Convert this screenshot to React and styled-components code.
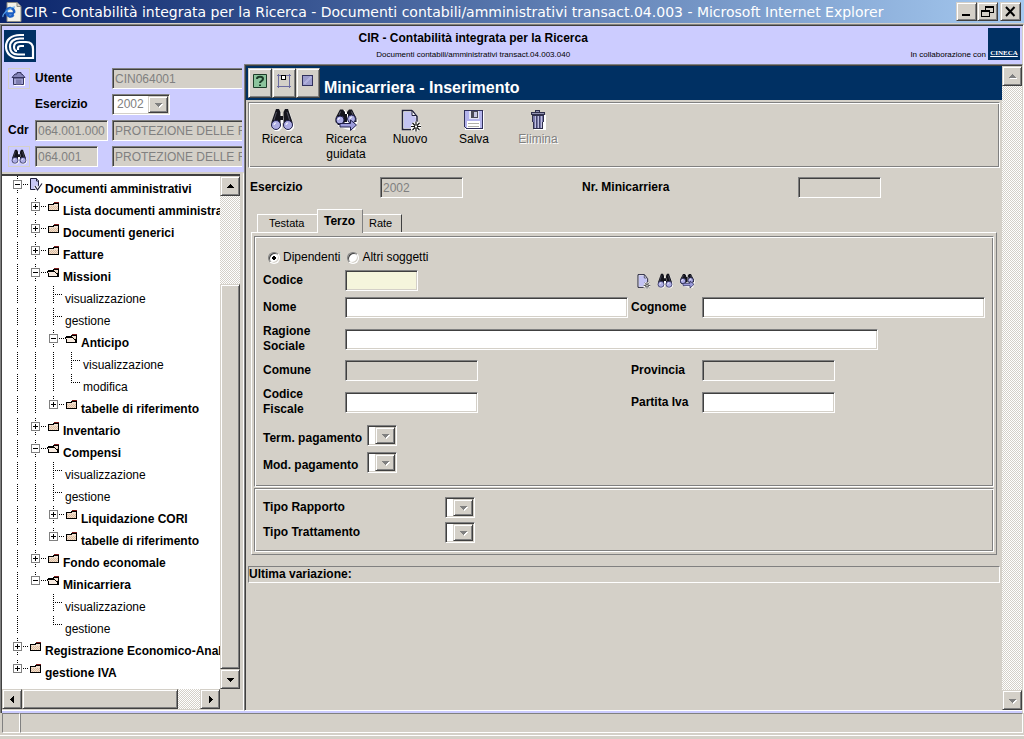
import styled, { createGlobalStyle, css } from 'styled-components'

const GlobalStyle = createGlobalStyle`
  * {
    box-sizing: border-box;
  }

  body {
    margin: 0;
    background: #d4d0c8;
    color: #000;
    font-family: 'Liberation Sans', Arial, sans-serif;
    font-size: 12px;
    line-height: 15px;
  }

  button,
  input,
  select {
    font: inherit;
  }

  svg {
    display: block;
    flex: none;
  }
`

/* Bordi in stile Windows classico */
const sunken = css`
  border: 1px solid;
  border-color: #808080 #fff #fff #808080;
  box-shadow: inset 1px 1px #404040, inset -1px -1px #d4d0c8;
`

const raised = css`
  border: 1px solid;
  border-color: #d4d0c8 #404040 #404040 #d4d0c8;
  box-shadow: inset 1px 1px #fff, inset -1px -1px #808080;
`

const groove = css`
  border: 1px solid;
  border-color: #808080 #fff #fff #808080;
  box-shadow: inset 1px 1px #fff, inset -1px -1px #808080;
`

const Window = styled.div`
  display: flex;
  flex-direction: column;
  height: 100vh;
  min-height: 600px;
  overflow: hidden;
`

const TitleBar = styled.header`
  display: flex;
  align-items: center;
  flex: none;
  height: 24px;
  padding: 0 3px 0 2px;
  border-bottom: 1px solid #d4d0c8;
  background: linear-gradient(to right, #0a246a, #a6caf0);
`

const WindowTitle = styled.h1`
  flex: 1;
  margin: 0 0 0 2px;
  color: #fff;
  font: 14px/22px 'DejaVu Sans', Verdana, sans-serif;
  white-space: nowrap;
`

const WindowButton = styled.button`
  ${raised}
  display: flex;
  align-items: center;
  justify-content: center;
  width: 21px;
  height: 19px;
  padding: 0;
  background: #d4d0c8;

  &:last-child {
    margin-left: 2px;
  }
`

const Client = styled.div`
  display: flex;
  flex: 1;
  flex-direction: column;
  min-height: 0;
  padding-bottom: 2px;
  border: 1px solid;
  border-color: #808080 #fff transparent #808080;
  border-bottom: 0;
  box-shadow: inset 1px 1px #404040, inset -1px 0 #d4d0c8;
  background: #ccccff;
`

const Banner = styled.div`
  display: flex;
  flex: none;
  height: 39px;
  padding: 1px 3px 0;
`

const LogoCnr = styled.div`
  margin-top: 4px;
`

const BannerText = styled.div`
  flex: 1;
  text-align: center;
`

const BannerTitle = styled.h2`
  margin: 0;
  font-size: 12px;
  line-height: 24px;
`

const SmallText = styled.span`
  display: block;
  font-size: 8px;
  line-height: 10px;
`

const Partner = styled.div`
  display: flex;
  align-items: flex-end;
  gap: 2px;
  height: 32px;
  margin-top: 2px;
`

const CinecaLogo = styled.div`
  display: flex;
  align-items: flex-end;
  justify-content: center;
  width: 32px;
  height: 32px;
  padding-bottom: 2px;
  background: #003063;
  color: #fff;
  font: bold 7px/9px 'Liberation Serif', serif;
  text-decoration: underline;
`

const Frames = styled.div`
  display: flex;
  flex: 1;
  min-height: 0;
  padding-left: 1px;
`

const Sidebar = styled.aside`
  display: flex;
  flex: none;
  flex-direction: column;
  width: 242px;
`

const UserFields = styled.div`
  display: grid;
  grid-template-columns: 27px 77px 170px;
  grid-auto-rows: 21px;
  row-gap: 5px;
  align-items: center;
  height: 108px;
  margin-right: 2px;
  padding: 4px 0 0 6px;
  overflow: hidden;
`

const Label = styled.label`
  font-weight: bold;
  white-space: ${(p) => (p.$wrap ? 'normal' : 'nowrap')};
`

const IconButton = styled.button`
  display: flex;
  align-items: center;
  justify-content: center;
  width: 22px;
  height: 21px;
  padding: 0;
  border: ${(p) => (p.$framed ? '1px solid #d4d0c8' : '0')};
  background: none;
`

const Field = styled.input`
  ${sunken}
  width: ${(p) => p.$width}px;
  height: 21px;
  padding: 0 2px;
  border-radius: 0;
  background: ${(p) => p.$bg || '#fff'};
  color: #000;

  &:disabled {
    background: #d4d0c8;
    color: #808080;
  }
`

const SelectFrame = styled.span`
  ${sunken}
  position: relative;
  display: block;
  width: ${(p) => p.$width}px;
  height: 21px;
  padding: 2px;
  background: #fff;
`

const SelectInput = styled.select`
  display: block;
  width: 100%;
  height: 15px;
  padding: 0 0 0 2px;
  border: 0;
  appearance: none;
  background: #fff;
  color: #808080;
  opacity: 1;
`

const SelectArrow = styled.span`
  ${raised}
  position: absolute;
  top: 1px;
  right: 1px;
  display: flex;
  align-items: center;
  justify-content: center;
  width: 20px;
  height: 17px;
  background: #d4d0c8;
  pointer-events: none;
`

const TreeFrame = styled.div`
  display: flex;
  flex: 1;
  flex-direction: column;
  min-height: 0;
  padding: 0 3px 1px 0;
  border-top: 2px solid #d4d0c8;
  border-right: 1px solid #fff;
  border-bottom: 1px solid #fff;
  background: #d4d0c8;
`

const TreeBody = styled.div`
  display: grid;
  flex: 1;
  grid-template-columns: 1fr 20px;
  grid-template-rows: 1fr 20px;
  min-height: 0;
  border-top: 2px solid #404040;
`

const Tree = styled.ul`
  min-width: 0;
  min-height: 0;
  margin: 0;
  padding: 0;
  overflow: hidden;
  background: #fff;
  list-style: none;
`

const TreeRow = styled.li`
  display: flex;
  height: 22px;
  white-space: nowrap;
`

const TreeLink = styled.a`
  flex: none;
  padding-top: 4px;
  color: #000;
  font-weight: ${(p) => (p.$leaf ? 'normal' : 'bold')};
  line-height: 18px;
  text-decoration: none;
`

const TreeIcon = styled.span`
  flex: none;
  width: 16px;
  padding-top: ${(p) => (p.$doc ? 2 : 4)}px;
`

const ScrollBar = styled.div`
  display: flex;
  flex: none;
  flex-direction: ${(p) => (p.$horizontal ? 'row' : 'column')};
  width: ${(p) => (p.$horizontal ? 'auto' : '20px')};
  background: repeating-conic-gradient(#fff 0 25%, #d4d0c8 0 50%) 0 0 / 2px 2px;
`

const ScrollButton = styled.button`
  ${raised}
  display: flex;
  flex: none;
  align-items: center;
  justify-content: center;
  width: 20px;
  height: 20px;
  padding: 0;
  background: #d4d0c8;
`

const ScrollSpace = styled.div`
  flex: ${(p) => p.$size};
`

const ScrollThumb = styled.div`
  ${raised}
  flex: ${(p) => p.$size};
  background: #d4d0c8;
`

const MainFrame = styled.main`
  display: flex;
  flex: 1;
  min-width: 0;
  padding: 1px 0 0 1px;
  border: 1px solid;
  border-color: #808080 #d4d0c8 #fff #808080;
  box-shadow: inset 1px 1px #404040;
  background: #d4d0c8;
`

const Content = styled.div`
  flex: 1;
  min-width: 0;
`

const PageHeader = styled.div`
  display: flex;
  height: 34px;
  padding: 2px 0 0 2px;
  background: #003063;
`

const HeaderButton = styled.button`
  ${raised}
  display: flex;
  justify-content: center;
  width: 24px;
  height: 30px;
  padding: 5px 0 0;
  background: #d4d0c8;
`

const PageTitle = styled.h2`
  margin: 8px 0 0 4px;
  color: #fff;
  font-size: 16px;
  line-height: 24px;
  white-space: nowrap;
`

const Toolbar = styled.div`
  ${groove}
  display: flex;
  height: 66px;
  margin: 2px 2px 9px;
  padding-left: 1px;
`

const ToolButton = styled.button`
  display: flex;
  flex-direction: column;
  align-items: center;
  width: 64px;
  padding: 5px 0 0;
  border: 0;
  background: none;
  color: #000;

  &:disabled {
    color: #808080;
    text-shadow: 1px 1px #fff;
  }
`

const KeyRow = styled.div`
  display: grid;
  grid-template-columns: 130px 202px 216px auto;
  justify-content: start;
  align-items: center;
  margin: 0 4px 11px;
`

const Tabs = styled.div`
  display: flex;
  align-items: flex-end;
  height: 24px;
  margin: 0 11px -1px;
`

const Tab = styled.button`
  position: relative;
  height: ${(p) => (p.$active ? 24 : 18)}px;
  margin-bottom: ${(p) => (p.$active ? 0 : 1)}px;
  padding: 0 6px 0 ${(p) => (p.$wide ? 11 : 6)}px;
  width: ${(p) => p.$width}px;
  border: 0;
  border-top: 1px solid #fff;
  border-left: ${(p) => (p.$after ? '0' : '1px solid #fff')};
  border-right: ${(p) => (p.$wide ? '0' : `1px solid ${p.$active ? '#808080' : '#404040'}`)};
  background: #d4d0c8;
  color: #000;
  font-size: ${(p) => (p.$active ? 12 : 11)}px;
  font-weight: ${(p) => (p.$active ? 'bold' : 'normal')};
  text-align: left;
`

const Panel = styled.div`
  margin: 0 5px;
  padding: 3px 2px 2px;
  border: 1px solid;
  border-color: #fff #808080 #808080 #fff;
`

const Group = styled.div`
  ${groove}
  padding: 8px;
  margin-top: ${(p) => (p.$next ? 1 : 0)}px;
`

const RadioRow = styled.div`
  display: flex;
  align-items: center;
  gap: 7px;
  height: 25px;
  padding-left: 5px;
`

const RadioLabel = styled.label`
  display: flex;
  align-items: center;
  gap: 3px;
`

const Radio = styled.input`
  width: 12px;
  height: 12px;
  margin: 0;
  border: 1px solid;
  border-color: #808080 #fff #fff #808080;
  border-radius: 50%;
  appearance: none;
  background: #fff;
  box-shadow: inset 1px 1px #404040, inset -1px -1px #d4d0c8;

  &:checked {
    background: radial-gradient(circle, #000 0 2px, #fff 2px);
  }
`

const DetailGrid = styled.div`
  display: grid;
  grid-template-columns: 82px 286px 71px minmax(0, 283px);
  row-gap: 6px;
  align-items: center;
`

const WideCell = styled.div`
  grid-column: span ${(p) => p.$span};
`

const SearchIcons = styled.div`
  display: flex;
  grid-column: span 2;
  padding-left: 1px;
`

const SelectRows = styled.div`
  display: grid;
  grid-template-columns: ${(p) => p.$label}px 30px;
  row-gap: ${(p) => p.$gap}px;
  align-items: ${(p) => (p.$spaced ? 'end' : 'center')};
  padding: ${(p) => (p.$spaced ? '8px 0 5px' : '0')};
`

const LastChange = styled.div`
  margin: 11px 2px 0;
  border: 1px solid;
  border-color: #808080 #fff #fff #808080;
  font-weight: bold;
`

const StatusBar = styled.footer`
  display: flex;
  flex: none;
  height: 20px;
  margin: 0 1px 0 2px;
`

const StatusCell = styled.div`
  flex: ${(p) => (p.$fill ? '1' : '0 0 18px')};
  border: 1px solid;
  border-color: #808080 #fff #fff #808080;
`

const BottomEdge = styled.div`
  flex: none;
  height: 6px;
  padding-top: 2px;

  &::before {
    content: '';
    display: block;
    border-top: 1px solid #fff;
  }
`

function Arrow({ dir = 'down', disabled }) {
  const angle = { down: 0, left: 90, up: 180, right: 270 }[dir]
  const shape = 'M2 4h7v1H8v1H7v1H6v1H5V7H4V6H3V5H2z'
  return (
    <svg width="11" height="11" viewBox="0 0 11 11" shapeRendering="crispEdges">
      {disabled && (
        <path d={shape} fill="#fff" transform={`translate(1 1) rotate(${angle} 5.5 5.5)`} />
      )}
      <path
        d={shape}
        fill={disabled ? '#808080' : '#000'}
        transform={`rotate(${angle} 5.5 5.5)`}
      />
    </svg>
  )
}

function BinocularsIcon({ size = 24 }) {
  return (
    <svg width={size} height={size} viewBox="0 0 24 24">
      <path
        d="M6 1.500h3l1.500 3V9h3V4.500L15 1.500h3L23 16v3l-3 3h-4l-3-3v-5h-2v5l-3 3H4l-3-3v-3z"
        fill="#fff"
        transform="translate(1 1)"
      />
      <path
        d="M6 1h3l1.500 3v14L8 21H4l-2.500-3v-4zM18 1h-3l-1.500 3v14l2.500 3h4l2.500-3v-4zM10 8h4v4h-4z"
        fill="#14141c"
      />
      <path d="M6.500 4 4 12M17 4l2.500 8" stroke="#50505f" />
      <circle cx="6" cy="17" r="4.500" fill="#adade4" stroke="#20204c" />
      <circle cx="18" cy="17" r="4.500" fill="#adade4" stroke="#20204c" />
      <path d="M4 17a2 2 0 0 1 2-2M16 17a2 2 0 0 1 2-2" stroke="#fff" fill="none" />
    </svg>
  )
}

function GuidedIcon({ size = 24 }) {
  return (
    <svg width={size} height={size} viewBox="0 0 24 24">
      <path
        d="M4 5 7 1h3l2 3 2-3h3l3 4 3 7-3 9h-6L4 18l-3-4z"
        fill="#fff"
        transform="translate(1 1)"
      />
      <path
        d="M6 1.500h3L11 4v10l-3 3H4l-2.500-3v-4zM18 1.500h-3L13 4v10h9.500v-4zM10 6h4v8h-4z"
        fill="#14141c"
      />
      <path d="M6.500 3.500 5 7M17.500 3.500 19 7" stroke="#60606f" />
      <circle cx="6" cy="12" r="4" fill="#adade4" stroke="#20204c" />
      <circle cx="17.500" cy="11" r="4" fill="#adade4" stroke="#20204c" />
      <path d="M4 12a2 2 0 0 1 2-2M16 11a2 2 0 0 1 2-2" stroke="#fff" fill="none" />
      <path d="M6 15.500h10.500V12l6 5-6 5.500v-3.500H6z" fill="#9c9cdc" stroke="#20204c" />
    </svg>
  )
}

function NewIcon({ size = 24 }) {
  return (
    <svg width={size} height={size} viewBox="0 0 24 24">
      <path d="M4.500 3h11l4 5v13.500h-15z" fill="#fff" />
      <path d="M14 2.500H4.500v19H13M14 2.500l5 6V14" fill="none" stroke="#20203c" strokeWidth="1.500" />
      <path d="M6 4h7l5 6v5l-5 5H6z" fill="#c3c3f3" />
      <path d="M14 2.500v5h4z" fill="#fff" stroke="#20203c" />
      <path
        d="M18 13.500v10M13 18.500h10M14.500 15l7 7M21.500 15l-7 7"
        stroke="#fff"
        strokeWidth="3"
      />
      <path
        d="M18 13.500v10M13 18.500h10M14.500 15l7 7M21.500 15l-7 7"
        stroke="#101010"
        strokeWidth="1.200"
      />
      <path d="M17 17.500h2v2h-2z" fill="#fff" />
    </svg>
  )
}

function SaveIcon() {
  return (
    <svg width="24" height="24" viewBox="0 0 24 24" shapeRendering="crispEdges">
      <path d="M3 3h19v19H3z" fill="#fff" />
      <path d="M2.500 2.500h18v18h-16l-2-2z" fill="#b4b4ec" stroke="#30305a" />
      <path d="M7 3h10v8H7z" fill="#e4e4f4" />
      <path d="M9 3h7v7H9z" fill="#4a4a58" />
      <path d="M12 4h3v5h-3z" fill="#c8c8e4" />
      <path d="M5 13h13v7H5z" fill="#fff" />
      <path d="M6 15.500h11M6 18.500h11" stroke="#b0b0a8" />
    </svg>
  )
}

function TrashIcon() {
  return (
    <svg width="24" height="24" viewBox="0 0 24 24" shapeRendering="crispEdges">
      <path d="M6 7h14v15H8z" fill="#fff" />
      <path d="M9.500 3.500v-1h4v1M5.500 4.500h13v2h-13z" fill="#9292b2" stroke="#30304c" />
      <path d="M6.500 7.500h11l-1 13h-9z" fill="#7777a8" stroke="#30304c" />
      <path d="M9.500 8v12M12.500 8v12M15.500 8v12" stroke="#c0c0e0" />
      <path d="M10.500 8v12M13.500 8v12" stroke="#44446c" />
    </svg>
  )
}

function HomeIcon() {
  return (
    <svg width="16" height="16" viewBox="0 0 16 16">
      <path d="M3 7h11v8H3z" fill="#fff" />
      <path d="M1 6.500 4 3h2V1.500h4V3h1l3 3.500z" fill="#8585b8" stroke="#35355e" />
      <path d="M2.500 7h10v6.500h-10z" fill="#a5a5d4" stroke="#35355e" />
      <path d="M5 8.500h5.500v5H5z" fill="#7d7dae" />
    </svg>
  )
}

function FolderIcon({ open }) {
  return (
    <svg width="13" height="9" viewBox="0 0 13 9" shapeRendering="crispEdges">
      <path d="M1 2h5V1h6v8H1z" fill="#000" />
      <path d="M7 0h5v1H7z" fill="#7a1c1c" />
      <path d="M2 3h9v5H2zM7 2h4v1H7z" fill="#f2e0cf" />
      <path d="M2 4.500h9M2 6.500h9" stroke="#dcbca0" strokeDasharray="1 1" />
      <path d="M3 5.500h8M3 7.500h8" stroke="#dcbca0" strokeDasharray="1 1" />
      {open && (
        <>
          <path d="M0 3h8v1h1v1h1v3H2V6H1V5H0z" fill="#f8ebe0" />
          <path d="M0 3.500h8M8 4.500h1M9 5.500h1M0 4.500h1M1 5.500h1M10.500 5v4" stroke="#000" />
        </>
      )}
    </svg>
  )
}

function DocIcon() {
  return (
    <svg width="14" height="14" viewBox="0 0 14 14">
      <path d="M1.500.5h6l2 2v9h-8z" fill="#c8c8f6" stroke="#20203c" />
      <path d="M7.500.5v2.500h2" fill="#fff" stroke="#20203c" />
      <path d="m6 8 2.500 4L13 5.500" fill="none" stroke="#fff" strokeWidth="3" />
      <path d="m6 8 2.500 4L13 5.500" fill="none" stroke="#20203c" strokeWidth="1.200" />
    </svg>
  )
}

// Linee tratteggiate e casella +/- di una riga dell'albero
function Guides({ lines, level, box, last }) {
  const x = 15 + level * 18
  return (
    <svg
      width={x + 12}
      height="18"
      shapeRendering="crispEdges"
      fill="none"
      stroke="#000"
      strokeDasharray="1 1"
    >
      {lines.map((l) => (
        <path key={l} d={`M${15.5 + l * 18} 0v18`} />
      ))}
      <path d={`M${x + 0.5} 0v${last ? 9 : 18}`} />
      <path d={`M${x} 8.500h${box ? 11 : 10}`} />
      {box && (
        <g strokeDasharray="none">
          <path d={`M${x - 3.5} 4.500h8v8h-8z`} fill="#fff" stroke="#808080" />
          <path d={`M${x - 2} 8.500h5`} />
          {box === '+' && <path d={`M${x + 0.5} 6v5`} />}
        </g>
      )}
    </svg>
  )
}

const treeItems = [
  { text: 'Documenti amministrativi', level: 0, lines: [], box: '-', doc: true },
  { text: 'Lista documenti amministra', level: 1, lines: [0], box: '+' },
  { text: 'Documenti generici', level: 1, lines: [0], box: '+' },
  { text: 'Fatture', level: 1, lines: [0], box: '+' },
  { text: 'Missioni', level: 1, lines: [0], box: '-' },
  { text: 'visualizzazione', level: 2, lines: [0, 1] },
  { text: 'gestione', level: 2, lines: [0, 1] },
  { text: 'Anticipo', level: 2, lines: [0, 1], box: '-' },
  { text: 'visualizzazione', level: 3, lines: [0, 1, 2] },
  { text: 'modifica', level: 3, lines: [0, 1, 2], last: true },
  { text: 'tabelle di riferimento', level: 2, lines: [0, 1], box: '+', last: true },
  { text: 'Inventario', level: 1, lines: [0], box: '+' },
  { text: 'Compensi', level: 1, lines: [0], box: '-' },
  { text: 'visualizzazione', level: 2, lines: [0, 1] },
  { text: 'gestione', level: 2, lines: [0, 1] },
  { text: 'Liquidazione CORI', level: 2, lines: [0, 1], box: '+' },
  { text: 'tabelle di riferimento', level: 2, lines: [0, 1], box: '+', last: true },
  { text: 'Fondo economale', level: 1, lines: [0], box: '+' },
  { text: 'Minicarriera', level: 1, lines: [0], box: '-', last: true },
  { text: 'visualizzazione', level: 2, lines: [0] },
  { text: 'gestione', level: 2, lines: [0], last: true },
  { text: 'Registrazione Economico-Anali', level: 0, lines: [], box: '+' },
  { text: 'gestione IVA', level: 0, lines: [], box: '+', last: true },
]

function Select({ id, width = 30, value = '' }) {
  return (
    <SelectFrame $width={width}>
      <SelectInput id={id} disabled defaultValue={value}>
        <option>{value}</option>
      </SelectInput>
      <SelectArrow>
        <Arrow disabled />
      </SelectArrow>
    </SelectFrame>
  )
}

function NavTree() {
  return (
    <TreeFrame>
      <TreeBody>
        <Tree>
          {treeItems.map((item, i) => (
            <TreeRow key={i}>
              <Guides {...item} />
              {item.box && (
                <TreeIcon $doc={item.doc}>
                  {item.doc ? <DocIcon /> : <FolderIcon open={item.box === '-'} />}
                </TreeIcon>
              )}
              <TreeLink href="#" $leaf={!item.box}>
                {item.text}
              </TreeLink>
            </TreeRow>
          ))}
        </Tree>
        <ScrollBar>
          <ScrollButton aria-label="Su">
            <Arrow dir="up" />
          </ScrollButton>
          <ScrollSpace $size={88} />
          <ScrollThumb $size={385} />
          <ScrollButton aria-label="Giù">
            <Arrow />
          </ScrollButton>
        </ScrollBar>
        <ScrollBar $horizontal>
          <ScrollButton aria-label="Sinistra">
            <Arrow dir="left" />
          </ScrollButton>
          <ScrollThumb $size={156} />
          <ScrollSpace $size={22} />
          <ScrollButton aria-label="Destra">
            <Arrow dir="right" />
          </ScrollButton>
        </ScrollBar>
      </TreeBody>
    </TreeFrame>
  )
}

function Side() {
  return (
    <Sidebar>
      <UserFields>
        <IconButton $framed aria-label="Home">
          <HomeIcon />
        </IconButton>
        <Label htmlFor="utente">Utente</Label>
        <Field id="utente" $width={170} defaultValue="CIN064001" disabled />
        <span />
        <Label htmlFor="anno">Esercizio</Label>
        <Select id="anno" width={58} value="2002" />
        <Label htmlFor="cdr">Cdr</Label>
        <Field id="cdr" $width={73} defaultValue="064.001.000" disabled />
        <Field aria-label="Descrizione Cdr" $width={170} defaultValue="PROTEZIONE DELLE F" disabled />
        <IconButton $framed aria-label="Cerca">
          <BinocularsIcon size={16} />
        </IconButton>
        <Field aria-label="Unità" $width={63} defaultValue="064.001" disabled />
        <Field aria-label="Descrizione unità" $width={170} defaultValue="PROTEZIONE DELLE F" disabled />
      </UserFields>
      <NavTree />
    </Sidebar>
  )
}

function TerzoPanel() {
  return (
    <Panel>
      <Group>
        <RadioRow>
          <RadioLabel>
            <Radio type="radio" name="tipo" defaultChecked />
            Dipendenti
          </RadioLabel>
          <RadioLabel>
            <Radio type="radio" name="tipo" />
            Altri soggetti
          </RadioLabel>
        </RadioRow>
        <DetailGrid>
          <Label htmlFor="codice">Codice</Label>
          <Field id="codice" $width={73} $bg="#f5f5dc" />
          <SearchIcons>
            <IconButton aria-label="Nuovo terzo">
              <NewIcon size={16} />
            </IconButton>
            <IconButton aria-label="Ricerca terzo">
              <BinocularsIcon size={16} />
            </IconButton>
            <IconButton aria-label="Ricerca guidata terzo">
              <GuidedIcon size={16} />
            </IconButton>
          </SearchIcons>

          <Label htmlFor="nome">Nome</Label>
          <Field id="nome" $width={283} />
          <Label htmlFor="cognome">Cognome</Label>
          <Field id="cognome" $width={283} />

          <Label htmlFor="ragione" $wrap>
            Ragione Sociale
          </Label>
          <WideCell $span={3}>
            <Field id="ragione" $width={533} />
          </WideCell>

          <Label htmlFor="comune">Comune</Label>
          <Field id="comune" $width={133} disabled />
          <Label htmlFor="provincia">Provincia</Label>
          <Field id="provincia" $width={133} disabled />

          <Label htmlFor="fiscale" $wrap>
            Codice
            <br />
            Fiscale
          </Label>
          <Field id="fiscale" $width={133} />
          <Label htmlFor="iva">Partita Iva</Label>
          <Field id="iva" $width={133} />
        </DetailGrid>
        <SelectRows $label={104} $gap={6} $spaced>
          <Label htmlFor="termini">Term. pagamento</Label>
          <Select id="termini" />
          <Label htmlFor="modalita">Mod. pagamento</Label>
          <Select id="modalita" />
        </SelectRows>
      </Group>
      <Group $next>
        <SelectRows $label={182} $gap={4}>
          <Label htmlFor="rapporto">Tipo Rapporto</Label>
          <Select id="rapporto" />
          <Label htmlFor="trattamento">Tipo Trattamento</Label>
          <Select id="trattamento" />
        </SelectRows>
      </Group>
    </Panel>
  )
}

const App = () => {
  return (
    <Window>
      <GlobalStyle />
      <TitleBar>
        <svg width="20" height="20" viewBox="0 0 20 20">
          <path d="M5 .5h10l4 4v15H5z" fill="#f4f2e8" stroke="#8c8c84" />
          <path d="M15 .5v4h4" fill="#d4d0c8" stroke="#8c8c84" />
          <path
            d="M12 11.500H4.500a4 4 0 1 1 7.500-.5M4.500 11.500A4 4 0 0 0 11.500 13"
            fill="none"
            stroke="#1c5fc4"
            strokeWidth="2.500"
          />
          <path d="M1 15c-1-3 7-10 12-10" fill="none" stroke="#5aa6ee" strokeWidth="1.200" />
        </svg>
        <WindowTitle>
          CIR - Contabilità integrata per la Ricerca - Documenti contabili/amministrativi
          transact.04.003 - Microsoft Internet Explorer
        </WindowTitle>
        <WindowButton aria-label="Riduci a icona">
          <svg width="13" height="11" shapeRendering="crispEdges">
            <path d="M2 9h8" stroke="#000" strokeWidth="2" />
          </svg>
        </WindowButton>
        <WindowButton aria-label="Ripristina">
          <svg width="13" height="11" fill="none" stroke="#000" shapeRendering="crispEdges">
            <path d="M4.500 4V.5h8v6H9M4 1.500h9M.5 4.500h8v6h-8zM0 5.500h9" />
          </svg>
        </WindowButton>
        <WindowButton aria-label="Chiudi">
          <svg width="13" height="11">
            <path d="m2 1 8.500 9M10.500 1 2 10" stroke="#000" strokeWidth="2" />
          </svg>
        </WindowButton>
      </TitleBar>

      <Client>
        <Banner>
          <LogoCnr>
            <svg
              width="32"
              height="32"
              viewBox="0 0 32 32"
              fill="none"
              stroke="#fff"
              strokeWidth="2.200"
            >
              <path d="M0 0h32v32H0z" fill="#003063" stroke="none" />
              <path d="M20 5h-4C7 5 2 10 2 16.500S7 28 14 28h15V19c0-5-3-7-7-7h-6c-4 0-6 2-6 5s2 4 3 4" />
              <path d="M20 8.500h-4c-6 0-10 3-10 8s3 8 8 8h7" />
              <path d="M20 16h-3c-2 0-3 1-3 2v2" />
            </svg>
          </LogoCnr>
          <BannerText>
            <BannerTitle>CIR - Contabilità integrata per la Ricerca</BannerTitle>
            <SmallText>Documenti contabili/amministrativi transact.04.003.040</SmallText>
          </BannerText>
          <Partner>
            <SmallText>In collaborazione con</SmallText>
            <CinecaLogo>CINECA</CinecaLogo>
          </Partner>
        </Banner>

        <Frames>
          <Side />
          <MainFrame>
            <Content>
              <PageHeader>
                <HeaderButton aria-label="Aiuto">
                  <svg width="14" height="14" viewBox="0 0 14 14">
                    <path d="M.5.5h13v13H.5z" fill="#8cc49c" stroke="#1c3c28" />
                    <path
                      d="M4 5c0-3 6-3 6 0 0 2-3 2-3 4M7 10.500v1.500"
                      fill="none"
                      stroke="#1c3c28"
                      strokeWidth="2"
                    />
                  </svg>
                </HeaderButton>
                <HeaderButton aria-label="Dettagli">
                  <svg width="14" height="14" viewBox="0 0 14 14" fill="none" shapeRendering="crispEdges">
                    <path d="M1.500 0v14M12.500 0v14M0 1.500h14M0 12.500h14" stroke="#6c6ca0" />
                    <path d="M4.500 1.500h4v4h-4z" fill="#fff" stroke="#000" />
                  </svg>
                </HeaderButton>
                <HeaderButton aria-label="Riquadro">
                  <svg width="12" height="14" viewBox="0 0 12 14" shapeRendering="crispEdges">
                    <path d="M.5 1.500h10v10H.5z" fill="#9c9ccc" stroke="#30305c" />
                    <path d="M2 10 9 3" stroke="#b0b0dc" strokeWidth="2" />
                  </svg>
                </HeaderButton>
                <PageTitle>Minicarriera - Inserimento</PageTitle>
              </PageHeader>

              <Toolbar>
                <ToolButton>
                  <BinocularsIcon />
                  Ricerca
                </ToolButton>
                <ToolButton>
                  <GuidedIcon />
                  Ricerca guidata
                </ToolButton>
                <ToolButton>
                  <NewIcon />
                  Nuovo
                </ToolButton>
                <ToolButton>
                  <SaveIcon />
                  Salva
                </ToolButton>
                <ToolButton disabled>
                  <TrashIcon />
                  Elimina
                </ToolButton>
              </Toolbar>

              <KeyRow>
                <Label htmlFor="esercizio">Esercizio</Label>
                <Field id="esercizio" $width={83} defaultValue="2002" disabled />
                <Label htmlFor="numero">Nr. Minicarriera</Label>
                <Field id="numero" $width={83} disabled />
              </KeyRow>

              <Tabs>
                <Tab $width={60} $wide>
                  Testata
                </Tab>
                <Tab $width={46} $active>
                  Terzo
                </Tab>
                <Tab $width={39} $after>
                  Rate
                </Tab>
              </Tabs>
              <TerzoPanel />
              <LastChange>Ultima variazione:</LastChange>
            </Content>
            <ScrollBar>
              <ScrollButton aria-label="Su">
                <Arrow dir="up" disabled />
              </ScrollButton>
              <ScrollSpace $size={1} />
              <ScrollButton aria-label="Giù">
                <Arrow disabled />
              </ScrollButton>
            </ScrollBar>
          </MainFrame>
        </Frames>
      </Client>

      <StatusBar>
        <StatusCell />
        <StatusCell $fill />
      </StatusBar>
      <BottomEdge />
    </Window>
  )
}

export default App
